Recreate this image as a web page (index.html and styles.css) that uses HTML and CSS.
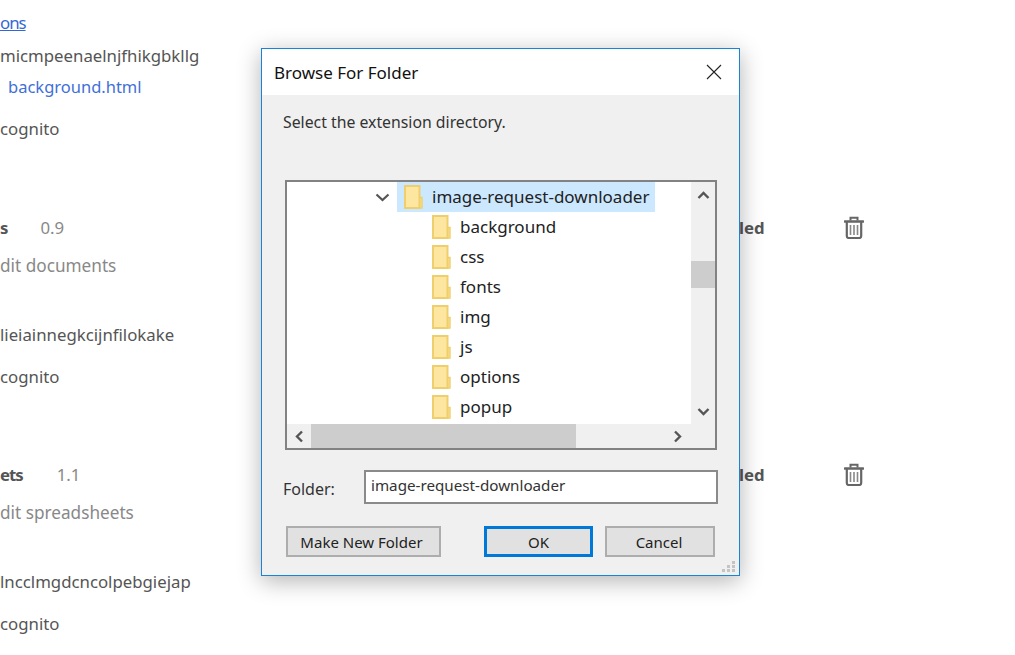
FILE: index.html
```html
<!DOCTYPE html>
<html lang="en">
<head>
    <meta charset="UTF-8">
    <title>Extensions</title>
    <link rel="stylesheet" href="styles.css">
</head>
<body>
    <svg class="defs" width="0" height="0">
        <symbol id="folder" viewBox="0 0 19 24">
            <path d="M1 1H15.5V23H1Z" fill="#fde7a0" stroke="#efcf6d" stroke-width="2"/>
            <path d="M16 12.5H18V23H16Z" fill="#fde7a0" stroke="#efcf6d" stroke-width="1.4"/>
        </symbol>
        <symbol id="trash" viewBox="0 0 20 23">
            <path d="M1 5.5H19" fill="none" stroke="#666" stroke-width="2.6" stroke-linecap="round"/>
            <path d="M6.5 4.5V1.8H13.5V4.5" fill="none" stroke="#666" stroke-width="2"/>
            <path d="M2.8 6V20Q2.8 22 4.8 22H15.2Q17.2 22 17.2 20V6" fill="none" stroke="#666" stroke-width="2.2"/>
            <path d="M6.5 9V19M10 9V19M13.5 9V19" fill="none" stroke="#888" stroke-width="1.6"/>
        </symbol>
    </svg>

    <!-- Extensions page behind the dialog -->
    <main class="page">
        <section class="ext ext-first">
            <div class="ext-info">
                <a class="link" href="#">ons</a>
                <p class="ext-id">micmpeenaelnjfhikgbkllg</p>
                <p class="ext-views"><a class="view-link" href="#">background.html</a></p>
                <p class="ext-incognito">cognito</p>
            </div>
        </section>
        <section class="ext">
            <div class="ext-info">
                <p class="ext-title"><b>s</b><span class="version">0.9</span></p>
                <p class="ext-desc">dit documents</p>
                <p class="ext-id ext-id-far">lieiainnegkcijnfilokake</p>
                <p class="ext-incognito">cognito</p>
            </div>
            <b class="ext-status">led</b>
            <svg class="trash"><use href="#trash"/></svg>
        </section>
        <section class="ext ext-last">
            <div class="ext-info">
                <p class="ext-title ext-title-long"><b>ets</b><span class="version">1.1</span></p>
                <p class="ext-desc">dit spreadsheets</p>
                <p class="ext-id ext-id-far">lncclmgdcncolpebgiejap</p>
                <p class="ext-incognito">cognito</p>
            </div>
            <b class="ext-status">led</b>
            <svg class="trash"><use href="#trash"/></svg>
        </section>
    </main>

    <!-- Browse For Folder dialog -->
    <div class="dialog">
        <header class="dialog-title">
            <span>Browse For Folder</span>
            <svg class="close" width="16" height="16" viewBox="0 0 16 16">
                <path d="M1 1L15 15M15 1L1 15" stroke="#222" stroke-width="1.1" fill="none"/>
            </svg>
        </header>
        <div class="dialog-body">
            <p class="prompt">Select the extension directory.</p>

            <div class="tree">
                <div class="tree-rows">
                    <div class="tree-row tree-root">
                        <svg class="chevron" width="15" height="9" viewBox="0 0 15 9">
                            <path d="M1.5 1.5L7.5 7L13.5 1.5" stroke="#555" stroke-width="2.2" fill="none"/>
                        </svg>
                        <div class="tree-selected">
                            <svg class="folder"><use href="#folder"/></svg>
                            <span>image-request-downloader</span>
                        </div>
                    </div>
                    <div class="tree-row"><svg class="folder"><use href="#folder"/></svg><span>background</span></div>
                    <div class="tree-row"><svg class="folder"><use href="#folder"/></svg><span>css</span></div>
                    <div class="tree-row"><svg class="folder"><use href="#folder"/></svg><span>fonts</span></div>
                    <div class="tree-row"><svg class="folder"><use href="#folder"/></svg><span>img</span></div>
                    <div class="tree-row"><svg class="folder"><use href="#folder"/></svg><span>js</span></div>
                    <div class="tree-row"><svg class="folder"><use href="#folder"/></svg><span>options</span></div>
                    <div class="tree-row"><svg class="folder"><use href="#folder"/></svg><span>popup</span></div>
                </div>
                <div class="scroll-v">
                    <svg width="13" height="9" viewBox="0 0 13 9"><path d="M1.5 7L6.5 2L11.5 7" stroke="#555" stroke-width="2.4" fill="none"/></svg>
                    <div class="thumb-v"></div>
                    <svg width="13" height="9" viewBox="0 0 13 9"><path d="M1.5 2L6.5 7L11.5 2" stroke="#555" stroke-width="2.4" fill="none"/></svg>
                </div>
                <div class="scroll-h">
                    <svg width="9" height="13" viewBox="0 0 9 13"><path d="M7 1.5L2 6.5L7 11.5" stroke="#555" stroke-width="2.4" fill="none"/></svg>
                    <div class="thumb-h"></div>
                    <svg width="9" height="13" viewBox="0 0 9 13"><path d="M2 1.5L7 6.5L2 11.5" stroke="#555" stroke-width="2.4" fill="none"/></svg>
                </div>
                <div class="scroll-corner"></div>
            </div>

            <div class="folder-field">
                <label class="folder-label" for="folderName">Folder:</label>
                <input class="folder-input" type="text" id="folderName" value="image-request-downloader">
            </div>

            <div class="button-row">
                <button class="btn btn-new" type="button">Make New Folder</button>
                <button class="btn btn-ok" type="button">OK</button>
                <button class="btn btn-cancel" type="button">Cancel</button>
            </div>
        </div>
        <svg class="grip" width="14" height="13" viewBox="0 0 14 13">
            <path d="M10 1h3v3h-3zM5 5h3v3H5zM10 5h3v3h-3zM0 9h3v3H0zM5 9h3v3H5zM10 9h3v3h-3z" fill="#c4c4c4"/>
        </svg>
    </div>
</body>
</html>
```

FILE: styles.css
```css
* {
    box-sizing: border-box;
}

html, body {
    height: 100%;
}

body {
    margin: 0;
    overflow: hidden;
    background-color: #fff;
    font-family: "Noto Sans", "Open Sans", sans-serif;
    color: #555;
    font-size: 16.8px;
}

p {
    margin: 0;
}

.defs {
    display: block;
    height: 0;
}

/* Extensions page */
.ext {
    display: grid;
    grid-template-columns: 739px 104px 20px;
    align-items: start;
    height: 247px;
    overflow: hidden;
}

.ext-first {
    height: 216px;
    padding-top: 11px;
}

.ext-last {
    height: 192px;
}

.ext-info p,
.ext-info .link,
.ext-status {
    line-height: 24px;
    white-space: nowrap;
}

.link {
    display: block;
    letter-spacing: -1px;
    color: #3367d6;
}

.ext-first .ext-id {
    margin-top: 9px;
}

.ext-views {
    margin-top: 7px;
    padding-left: 8px;
    font-size: 16.5px;
}

.view-link {
    color: #3f6fd8;
    text-decoration: none;
}

.ext-incognito {
    margin-top: 18px;
}

.ext-title-long b {
    letter-spacing: -1px;
}

.version {
    margin-left: 32px;
    color: #888;
}

.ext-title-long .version {
    margin-left: 34px;
}

.ext-desc {
    margin-top: 14px;
    font-size: 17.2px;
    color: #888;
}

.ext-id-far {
    margin-top: 45px;
}

.ext-status {
    color: #555;
}

.trash {
    width: 20px;
    height: 23px;
    margin-left: 1px;
}

/* Dialog */
.dialog {
    position: absolute;
    left: 261px;
    top: 48px;
    width: 479px;
    height: 528px;
    display: flex;
    flex-direction: column;
    background-color: #f0f0f0;
    border: 1px solid #1883d7;
    box-shadow: 0 5px 22px rgba(0, 0, 0, 0.3);
    color: #222;
    font-size: 15.8px;
}

.dialog-title {
    flex: 0 0 46px;
    display: flex;
    align-items: center;
    justify-content: space-between;
    padding: 0 17px 0 12px;
    background-color: #fff;
    font-size: 17px;
    color: #111;
}

.dialog-body {
    flex: 1;
    padding: 17px 21px 0 21px;
}

.prompt {
    line-height: 20px;
    color: #333;
}

.tree {
    display: grid;
    grid-template-columns: 1fr 24px;
    grid-template-rows: 1fr 24px;
    width: 432px;
    height: 270px;
    margin: 48px 0 0 2px;
    border: 2px solid #828282;
    background-color: #f0f0f0;
}

.tree-rows {
    background-color: #fff;
    overflow: hidden;
}

.tree-row {
    display: flex;
    align-items: center;
    gap: 9px;
    height: 30px;
    padding-left: 145px;
    font-size: 17px;
    color: #222;
    white-space: nowrap;
}

.tree-row span {
    margin-top: -2px;
}

.tree-root {
    gap: 7px;
    padding-left: 88px;
}

.tree-selected {
    display: flex;
    align-items: center;
    gap: 9px;
    width: 258px;
    height: 30px;
    padding-left: 7px;
    background-color: #cce8ff;
}

.folder {
    flex: none;
    width: 19px;
    height: 24px;
}

.scroll-v {
    display: flex;
    flex-direction: column;
    align-items: center;
    padding: 9px 0 8px;
}

.scroll-v svg:last-child {
    margin-top: auto;
}

.thumb-v {
    width: 24px;
    height: 27px;
    margin-top: 61px;
    background-color: #cdcdcd;
}

.scroll-h {
    display: flex;
    align-items: center;
    padding: 0 9px 0 8px;
}

.scroll-h svg:last-child {
    margin-left: auto;
}

.thumb-h {
    width: 265px;
    height: 24px;
    margin-left: 7px;
    background-color: #cdcdcd;
}

.folder-field {
    display: flex;
    align-items: center;
    margin-top: 20px;
}

.folder-label {
    width: 81px;
    padding-top: 4px;
    font-size: 16px;
    color: #333;
}

.folder-input {
    width: 354px;
    height: 34px;
    padding: 0 6px 4px 5px;
    border: 2px solid #8a8a8a;
    background-color: #fff;
    font-family: inherit;
    font-size: 15.2px;
    color: #333;
    outline: none;
}

.button-row {
    display: flex;
    margin-top: 22px;
    padding-left: 3px;
}

.btn {
    height: 31px;
    padding: 0 4px 0 0;
    border: 2px solid #adadad;
    background-color: #e1e1e1;
    font-family: inherit;
    font-size: 15px;
    color: #222;
}

.btn-new {
    width: 155px;
}

.btn-ok {
    width: 109px;
    margin-left: 43px;
    padding: 0;
    border-color: #0078d7;
    border-width: 3px;
}

.btn-cancel {
    width: 110px;
    margin-left: 12px;
    padding: 0 2px 0 0;
}

.grip {
    position: absolute;
    right: 3px;
    bottom: 2px;
}
```
